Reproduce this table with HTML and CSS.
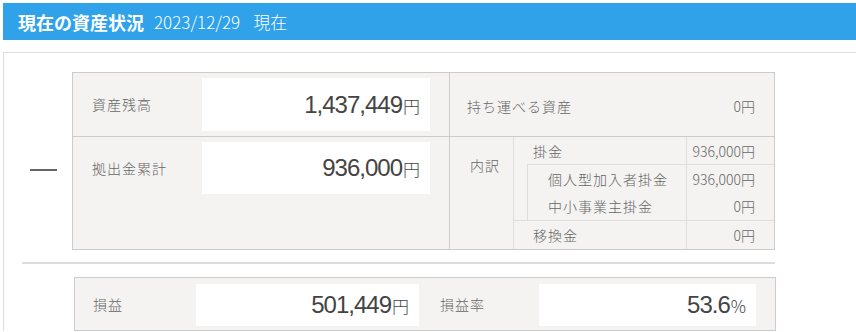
FILE: index.html
```html
<!DOCTYPE html>
<html lang="ja">
<head>
    <meta charset="UTF-8">
    <meta name="viewport" content="width=device-width, initial-scale=1.0">
    <title>現在の資産状況</title>
    <link rel="stylesheet" href="styles.css">
</head>
<body>

    <div class="page-head">
        <h1>現在の資産状況</h1>
        <span class="as-of">2023/12/29</span>
        <span class="as-of-label">現在</span>
    </div>

    <div class="panel">
        <div class="calc">
            <!-- 資産残高 − 拠出金累計 = 損益 -->
            <div class="operator"><span class="minus"></span></div>

            <div class="summary">
                <div class="summary-main">
                    <div class="sum-row sum-row-top">
                        <span class="label">資産残高</span>
                        <div class="amount-box"><span class="num">1,437,449</span><span class="unit">円</span></div>
                    </div>
                    <div class="sum-row">
                        <span class="label">拠出金累計</span>
                        <div class="amount-box"><span class="num">936,000</span><span class="unit">円</span></div>
                    </div>
                </div>

                <div class="summary-side">
                    <div class="side-top">
                        <span class="label">持ち運べる資産</span>
                        <span class="small-amt">0円</span>
                    </div>
                    <div class="breakdown">
                        <div class="breakdown-head">内訳</div>
                        <div class="breakdown-body">
                            <div class="bd-row">
                                <span class="bd-label">掛金</span>
                                <span class="bd-val">936,000円</span>
                            </div>
                            <div class="bd-group">
                                <div class="bd-row">
                                    <span class="bd-label">個人型加入者掛金</span>
                                    <span class="bd-val">936,000円</span>
                                </div>
                                <div class="bd-row bd-row-tall">
                                    <span class="bd-label">中小事業主掛金</span>
                                    <span class="bd-val">0円</span>
                                </div>
                            </div>
                            <div class="bd-row bd-row-tall bd-row-sep">
                                <span class="bd-label">移換金</span>
                                <span class="bd-val">0円</span>
                            </div>
                        </div>
                    </div>
                </div>
            </div>
        </div>

        <div class="divider"></div>

        <div class="result">
            <span class="label">損益</span>
            <div class="amount-box"><span class="num">501,449</span><span class="unit">円</span></div>
            <span class="label label-rate">損益率</span>
            <div class="amount-box"><span class="num">53.6</span><span class="unit">%</span></div>
        </div>
    </div>

</body>
</html>
```

FILE: styles.css
```css
body {
    margin: 3px 0 0 3px;
    font-family: "Noto Sans CJK JP", sans-serif;
    color: #666;
    background: #fff;
    overflow: hidden;
}

/* 見出しバー */
.page-head {
    height: 37px;
    background: #2fa2ea;
    color: #fff;
    display: flex;
    align-items: center;
    padding-left: 15px;
}

.page-head h1 {
    margin: 0;
    font-size: 18px;
    font-weight: bold;
}

.as-of {
    margin-left: 10px;
    font-size: 17px;
    font-weight: 300;
}

.as-of-label {
    margin-left: 13px;
    font-size: 17px;
    font-weight: 300;
}

.panel {
    margin-top: 12px;
    border-top: 1px solid #ddd;
    border-left: 1px solid #ddd;
    padding: 19px 0 0 18px;
}

.calc {
    display: flex;
}

.operator {
    width: 50px;
}

.minus {
    display: block;
    width: 27px;
    height: 2px;
    margin: 97px 0 0 8px;
    background: #666;
}

.label {
    font-size: 14px;
    font-weight: 300;
    letter-spacing: 1px;
    color: #666;
}

/* 白抜きの金額欄 */
.amount-box {
    background: #fff;
    text-align: right;
    padding-right: 10px;
    color: #444;
    white-space: nowrap;
}

.num {
    font-family: "Liberation Sans", Arial, sans-serif;
    font-size: 24px;
    letter-spacing: -1px;
}

.unit {
    font-size: 17px;
    font-weight: 300;
    margin-left: 1px;
}

.summary {
    display: flex;
    width: 703px;
    box-sizing: border-box;
    border: 1px solid #ccc;
    background: #f4f3f1;
}

.summary-main {
    width: 376px;
    border-right: 1px solid #ccc;
}

.sum-row {
    display: flex;
    height: 112px;
    align-items: flex-start;
    padding-top: 5px;
    box-sizing: border-box;
}

.sum-row-top {
    height: 64px;
    border-bottom: 1px solid #ccc;
}

.sum-row .label {
    width: 110px;
    padding-left: 19px;
    line-height: 53px;
}

.sum-row .amount-box {
    width: 228px;
    height: 53px;
    line-height: 53px;
    box-sizing: border-box;
}

.sum-row + .sum-row .amount-box {
    height: 52px;
    line-height: 52px;
}

.sum-row + .sum-row .label {
    line-height: 52px;
}

.summary-side {
    flex: 1;
}

.side-top {
    height: 64px;
    box-sizing: border-box;
    border-bottom: 1px solid #ccc;
    display: flex;
    align-items: center;
    justify-content: space-between;
    padding: 2px 19px 0 17px;
}

.small-amt,
.bd-val {
    font-size: 14px;
    font-weight: 300;
    color: #666;
}

/* 内訳 */
.breakdown {
    display: flex;
    height: 112px;
}

.breakdown-head {
    width: 64px;
    border-right: 1px solid #ddd;
    font-size: 14px;
    font-weight: 300;
    letter-spacing: 1px;
    padding: 18px 0 0 20px;
    box-sizing: border-box;
}

.breakdown-body {
    flex: 1;
}

.bd-row {
    display: flex;
    height: 27px;
}

.bd-row-tall {
    height: 28px;
}

.bd-label {
    flex: 1;
    display: flex;
    align-items: center;
    padding-left: 19px;
    font-size: 14px;
    font-weight: 300;
    letter-spacing: 1px;
}

.bd-val {
    width: 88px;
    border-left: 1px solid #ddd;
    display: flex;
    align-items: center;
    justify-content: flex-end;
    padding-right: 19px;
    box-sizing: border-box;
}

.bd-group {
    margin-left: 13px;
    border-top: 1px solid #ddd;
    border-left: 1px solid #ddd;
}

.bd-group .bd-label {
    padding-left: 20px;
}

.bd-row-sep {
    border-top: 1px solid #ddd;
}

.divider {
    width: 753px;
    height: 2px;
    margin-top: 12px;
    background: #ddd;
}

/* 損益 */
.result {
    display: grid;
    grid-template-columns: 121px 223px 120px 217px;
    align-items: center;
    width: 702px;
    height: 54px;
    box-sizing: border-box;
    margin: 13px 0 0 52px;
    border: 1px solid #ccc;
    background: #f4f3f1;
}

.result .label {
    padding-left: 18px;
}

.result .label-rate {
    padding-left: 21px;
}

.result .amount-box {
    height: 42px;
    line-height: 42px;
    margin-top: 1px;
}
```
